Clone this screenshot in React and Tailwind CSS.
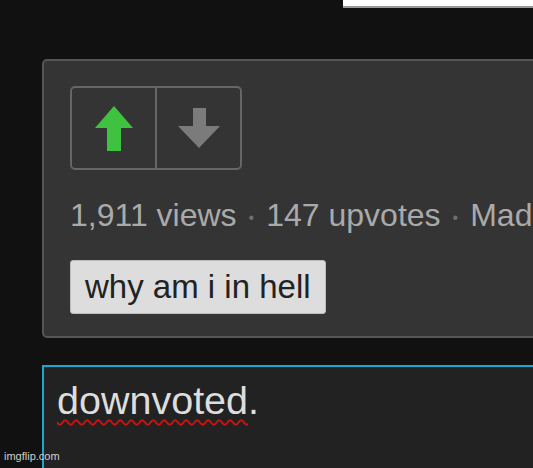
import React from "react";

const UpArrow = () => (
    <svg width="38" height="45" viewBox="0 0 38 45">
        <polygon points="19,0 38,22 26,22 26,45 12,45 12,22 0,22" fill="#3fc23f" />
    </svg>
);

const DownArrow = () => (
    <svg width="42" height="40" viewBox="0 0 42 40">
        <polygon points="15,0 28,0 28,18 42,18 21,40 0,18 15,18" fill="#7b7b7b" />
    </svg>
);

const App = () => {
    return (
        <div
            className="relative h-[468px] w-[533px] overflow-hidden bg-[#111111]"
            style={{ fontFamily: '"Liberation Sans", Arial, sans-serif' }}
        >
            <div className="ml-[343px] h-[8px] bg-white border-b-2 border-[#9a9a9a]" />

            <div className="mt-[51px] ml-[42px] w-[540px] h-[279px] rounded-[5px] border-2 border-[#555555] bg-[#343434] pl-[26px] pt-[25px]">
                <div className="flex w-[172px] h-[84px] rounded-[5px] border-2 border-[#666666]">
                    <div className="flex w-[85px] items-center justify-center border-r-2 border-[#666666]">
                        <UpArrow />
                    </div>
                    <div className="flex flex-1 items-center justify-center">
                        <DownArrow />
                    </div>
                </div>

                <div className="mt-[27px] whitespace-nowrap text-[32px] leading-[36px] text-[#aaaaaa]">
                    1,911 views
                    <span className="mx-[12px] text-[16px] align-middle text-[#6f6f6f]">•</span>
                    147 upvotes
                    <span className="mx-[12px] text-[16px] align-middle text-[#6f6f6f]">•</span>
                    Made by someone
                </div>

                <div className="mt-[24px] inline-block h-[54px] rounded-[3px] border border-[#bbbbbb] bg-[#dddddd] px-[14px] text-[33px] leading-[52px] text-[#222222]">
                    why am i in hell
                </div>
            </div>

            <div className="mt-[27px] ml-[42px] w-[540px] h-[120px] border-2 border-[#1ba6d2] bg-[#222222] pl-[13px] pt-[11px]">
                <div className="text-[39.5px] leading-[44px] text-[#dddddd]">
                    <span className="underline decoration-wavy decoration-[#cc1111] decoration-[2px] underline-offset-[5px]">downvoted</span>.
                </div>
            </div>

            <div className="absolute bottom-[4px] left-[4px] text-[11px] text-[#cfcfcf]">imgflip.com</div>
        </div>
    );
};

export default App;
